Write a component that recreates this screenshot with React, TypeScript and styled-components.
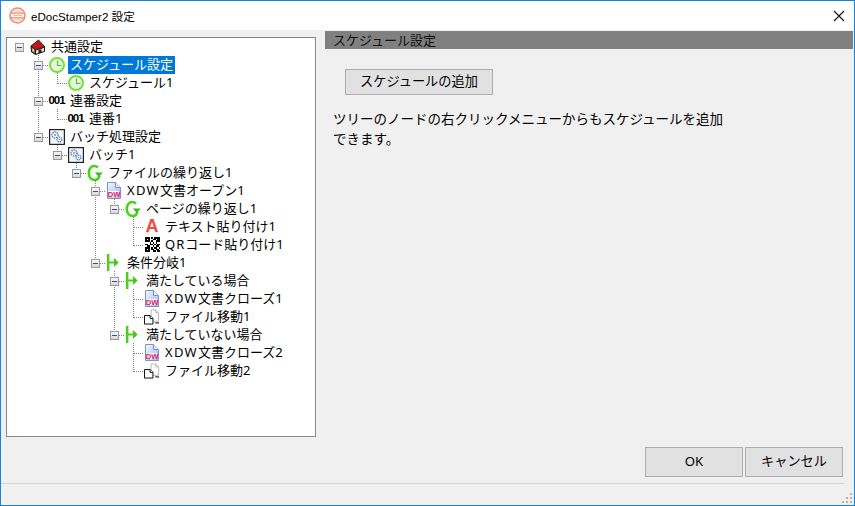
import React from "react";
import styled, { createGlobalStyle } from "styled-components";

const GlobalStyle = createGlobalStyle`
  html, body {
    margin: 0;
    padding: 0;
    background: #f0f0f0;
  }
  * {
    box-sizing: border-box;
  }
`;

const Win = styled.div`
  position: relative;
  width: 855px;
  height: 506px;
  display: flex;
  flex-direction: column;
  border: 1px solid #1883d7;
  background: #f0f0f0;
  color: #000;
  font-family: "Noto Sans", "Noto Sans CJK JP", sans-serif;
  font-size: 13px;
  overflow: hidden;
`;

const TitleBar = styled.div`
  height: 29px;
  flex: none;
  display: flex;
  align-items: center;
  padding: 0 9px 0 8px;
  background: #fff;
  font-family: "Liberation Sans", "Noto Sans CJK JP", sans-serif;
  font-size: 11.6px;
`;

const TitleText = styled.span`
  margin-left: 5px;
  flex: 1;
`;

const Body = styled.div`
  flex: 1;
  display: flex;
  min-height: 0;
`;

const TreeBox = styled.div`
  width: 310px;
  height: 400px;
  margin: 7px 0 0 5px;
  padding: 0 0 0 3px;
  flex: none;
  background: #fff;
  border: 1px solid #828790;
`;

const Row = styled.div`
  height: 18px;
  display: flex;
  align-items: stretch;
`;

// ツリーの点線1マス分
const Guide = styled.div<{ $kind?: "pipe" | "tee" | "elbow" }>`
  position: relative;
  width: 19px;
  flex: none;
  display: flex;
  align-items: center;
  justify-content: center;

  &::before {
    content: "";
    display: ${(p) => (p.$kind ? "block" : "none")};
    position: absolute;
    left: 9px;
    top: -1px;
    height: ${(p) => (p.$kind === "elbow" ? "11px" : "19px")};
    border-left: 1px dotted #808080;
  }

  &::after {
    content: "";
    display: ${(p) => (p.$kind === "tee" || p.$kind === "elbow" ? "block" : "none")};
    position: absolute;
    left: 10px;
    top: 9px;
    width: 9px;
    border-top: 1px dotted #808080;
  }
`;

const Expander = styled.div`
  position: relative;
  z-index: 1;
  width: 9px;
  height: 9px;
  margin-top: 1px;
  border: 1px solid #999;
  background: linear-gradient(#f8f8f8, #d8d8d8);
  display: flex;
  align-items: center;
  justify-content: center;

  &::before {
    content: "";
    width: 5px;
    height: 1px;
    background: #33508f;
  }
`;

const IconSlot = styled.div`
  width: 16px;
  height: 17px;
  margin-left: 1px;
  flex: none;
  display: flex;
  align-items: center;
  justify-content: center;
`;

const Label = styled.span<{ $selected?: boolean }>`
  height: 18px;
  line-height: 16px;
  margin-left: 3px;
  padding: 0 2px;
  white-space: nowrap;
  color: ${(p) => (p.$selected ? "#fff" : "#000")};
  background: ${(p) => (p.$selected ? "#0078d7" : "transparent")};
`;

// XDW / QR は参照画像だと少し幅広
const Latin = styled.span<{ $spacing: number }>`
  letter-spacing: ${(p) => p.$spacing}px;
`;

const NumberIcon = styled.span`
  font-family: "Liberation Sans", sans-serif;
  font-size: 11.5px;
  font-weight: 700;
  letter-spacing: -1.1px;
  line-height: 17px;
  margin-right: 1px;
`;

const LetterIcon = styled.span`
  font-family: "Liberation Sans", sans-serif;
  font-size: 18px;
  font-weight: 700;
  color: #e8503c;
  line-height: 17px;
`;

const Pane = styled.div`
  flex: 1;
  margin: 1px 1px 0 9px;
  display: flex;
  flex-direction: column;
  align-items: flex-start;
`;

const PaneHeader = styled.div`
  align-self: stretch;
  height: 18px;
  line-height: 18px;
  padding-left: 8px;
  background: #808080;
  color: #111;
`;

const PaneBody = styled.div`
  padding: 20px 0 0 20px;
`;

const Button = styled.button<{ $width: number; $height: number }>`
  width: ${(p) => p.$width}px;
  height: ${(p) => p.$height}px;
  padding: 0 0 3px;
  border: 1px solid #adadad;
  background: #e1e1e1;
  color: #000;
  font: inherit;
  font-size: 13.2px;
`;

const Note = styled.p`
  width: 410px;
  margin: 14px 0 0 -12px;
  font-size: 13.5px;
  line-height: 20px;
`;

const ButtonBar = styled.div`
  flex: none;
  height: 46px;
  display: flex;
  align-items: flex-end;
  justify-content: flex-end;
  gap: 2px;
  padding: 0 11px 6px 0;
`;

const StatusBar = styled.div`
  flex: none;
  height: 22px;
  margin-right: 10px;
  border-top: 1px solid #d7d7d7;
`;

const Corner = styled.div`
  position: absolute;
  right: 1px;
  bottom: 1px;
`;

const Grip = () => (
  <Corner>
    <svg width="12" height="12" viewBox="0 0 12 12" style={{ display: "block" }}>
      {[[9, 1], [5, 5], [9, 5], [1, 9], [5, 9], [9, 9]].map(([x, y]) => (
        <rect key={`${x}-${y}`} x={x} y={y} width="2" height="2" fill="#b5b5b5" />
      ))}
    </svg>
  </Corner>
);

const StampLogo = () => (
  <svg width="17" height="17" viewBox="0 0 17 17">
    <circle cx="8.5" cy="8.5" r="7.5" fill="#fff5f1" stroke="#f08a70" strokeWidth="1.5" />
    <path d="M2 6.2h13M2 10.8h13" stroke="#f08a70" strokeWidth="1.2" />
    <path d="M4.5 4h8M4 8.5h9M4.5 13h8" stroke="#f8b8a6" />
  </svg>
);

const HouseIcon = () => (
  <svg width="16" height="16" viewBox="0 0 16 16">
    <path d="M1 7 5.5 11v4.5L1.5 13z" fill="#7a6a4a" stroke="#111" />
    <rect x="2.5" y="9.5" width="1.5" height="3" fill="#f4e8c8" />
    <path d="M5.5 11l9-3v4.5l-9 3z" fill="#f0e2c0" stroke="#111" />
    <path d="M1 7 8.5 1 15 8 5.5 11z" fill="#c01818" stroke="#222" strokeLinejoin="round" />
    <rect x="8.5" y="10.5" width="3" height="3.5" fill="#222" />
  </svg>
);

const ClockIcon = () => (
  <svg width="16" height="16" viewBox="0 0 16 16">
    <circle cx="8" cy="8" r="7" fill="#e6f8d8" stroke="#74e040" strokeWidth="2" />
    <path d="M8.5 3.5V8.5H12.5" fill="none" stroke="#56bc34" strokeWidth="1.2" />
  </svg>
);

const GearIcon = () => (
  <svg width="16" height="16" viewBox="0 0 16 16">
    <rect x="0.6" y="0.6" width="14.8" height="14.8" fill="#f6f6f6" stroke="#222" strokeWidth="1.2" />
    <circle cx="6" cy="6" r="3" fill="#fff" stroke="#4f86c6" strokeWidth="1.4" strokeDasharray="1.5 .7" />
    <circle cx="6" cy="6" r="1" fill="#8a8a8a" />
    <circle cx="10.5" cy="10.5" r="2.4" fill="#fff" stroke="#4f86c6" strokeWidth="1.3" strokeDasharray="1.3 .6" />
    <circle cx="10.5" cy="10.5" r=".8" fill="#8a8a8a" />
  </svg>
);

const LoopIcon = () => (
  <svg width="16" height="18" viewBox="0 0 16 18">
    <path d="M11 3.4C9.8 2.4 8.8 2 7.5 2 4 2 1.8 4.9 1.8 9s2.2 7 5.8 7c2.5 0 4.2-1.4 4.8-4" fill="none" stroke="#44d414" strokeWidth="2.6" />
    <path d="M7.8 8.6h8l-4 4.4z" fill="#3fb626" />
  </svg>
);

const DocIcon = () => (
  <svg width="14" height="17" viewBox="0 0 14 17">
    <defs>
      <linearGradient id="docFill" x1="0" y1="0" x2="1" y2="1">
        <stop offset="0" stopColor="#f4f7ff" />
        <stop offset="1" stopColor="#9db8ee" />
      </linearGradient>
    </defs>
    <path d="M.5.5h8l5 5v11H.5z" fill="url(#docFill)" stroke="#7d92c0" />
    <path d="M8.5.5v5h5" fill="#e6ecf8" stroke="#7d92c0" />
    <rect x="1" y="9" width="10.5" height="6" fill="#fff" />
    <text x="0.8" y="14.8" fontSize="7.6" fontWeight="700" fill="#e0105c" fontFamily="Liberation Sans, sans-serif">DW</text>
  </svg>
);

const QR_CELLS = [
  "1110101111",
  "1010011011",
  "1110100111",
  "0001010100",
  "1101101011",
  "0110010110",
  "1110101101",
  "1010110110",
  "1110011011",
];

const QrIcon = () => (
  <svg width="15" height="15" viewBox="0 0 10 9" preserveAspectRatio="none" shapeRendering="crispEdges">
    {QR_CELLS.map((line, y) =>
      line.split("").map((c, x) =>
        c === "1" ? <rect key={`${x}-${y}`} x={x} y={y} width="1" height="1" fill="#000" /> : null
      )
    )}
  </svg>
);

const BranchIcon = () => (
  <svg width="16" height="17" viewBox="0 0 16 17">
    <rect x="1" y="0" width="2.4" height="17" fill="#44d414" />
    <rect x="3" y="7.5" width="6" height="2" fill="#44d414" />
    <path d="M8 4 12.6 8.5 8 13z" fill="#44c41c" />
  </svg>
);

const MoveIcon = () => (
  <svg width="17" height="16" viewBox="0 0 17 16">
    <path d="M7.5.5h5l3 3v9h-8z" fill="#fff" stroke="#b4b4b4" />
    <path d="M12.5.5v3h3" fill="#eee" stroke="#b4b4b4" />
    <rect x="12" y="13.5" width="4" height="1.5" fill="#444" />
    <path d="M.5 6.5h6l3 3v6h-9z" fill="#fff" stroke="#000" />
    <path d="M6.5 6.5v3h3" fill="#fff" stroke="#000" />
  </svg>
);

const ICONS = {
  house: <HouseIcon />,
  clock: <ClockIcon />,
  number: <NumberIcon>001</NumberIcon>,
  gear: <GearIcon />,
  loop: <LoopIcon />,
  doc: <DocIcon />,
  letter: <LetterIcon>A</LetterIcon>,
  qr: <QrIcon />,
  branch: <BranchIcon />,
  move: <MoveIcon />,
};

type GuideKind = "" | "pipe" | "tee" | "elbow";

type TreeNode = {
  guides: GuideKind[];
  open?: boolean;
  icon: keyof typeof ICONS;
  latin?: string;
  latinSpacing?: number;
  label: string;
  selected?: boolean;
};

const NODES: TreeNode[] = [
  { guides: [""], open: true, icon: "house", label: "共通設定" },
  { guides: ["", "tee"], open: true, icon: "clock", label: "スケジュール設定", selected: true },
  { guides: ["", "pipe", "elbow"], icon: "clock", label: "スケジュール1" },
  { guides: ["", "tee"], open: true, icon: "number", label: "連番設定" },
  { guides: ["", "pipe", "elbow"], icon: "number", label: "連番1" },
  { guides: ["", "elbow"], open: true, icon: "gear", label: "バッチ処理設定" },
  { guides: ["", "", "elbow"], open: true, icon: "gear", label: "バッチ1" },
  { guides: ["", "", "", "elbow"], open: true, icon: "loop", label: "ファイルの繰り返し1" },
  { guides: ["", "", "", "", "tee"], open: true, icon: "doc", latin: "XDW", latinSpacing: 1.3, label: "文書オープン1" },
  { guides: ["", "", "", "", "pipe", "elbow"], open: true, icon: "loop", label: "ページの繰り返し1" },
  { guides: ["", "", "", "", "pipe", "", "tee"], icon: "letter", label: "テキスト貼り付け1" },
  { guides: ["", "", "", "", "pipe", "", "elbow"], icon: "qr", latin: "QR", latinSpacing: 1, label: "コード貼り付け1" },
  { guides: ["", "", "", "", "elbow"], open: true, icon: "branch", label: "条件分岐1" },
  { guides: ["", "", "", "", "", "tee"], open: true, icon: "branch", label: "満たしている場合" },
  { guides: ["", "", "", "", "", "pipe", "tee"], icon: "doc", latin: "XDW", latinSpacing: 1.3, label: "文書クローズ1" },
  { guides: ["", "", "", "", "", "pipe", "elbow"], icon: "move", label: "ファイル移動1" },
  { guides: ["", "", "", "", "", "elbow"], open: true, icon: "branch", label: "満たしていない場合" },
  { guides: ["", "", "", "", "", "", "tee"], icon: "doc", latin: "XDW", latinSpacing: 1.3, label: "文書クローズ2" },
  { guides: ["", "", "", "", "", "", "elbow"], icon: "move", label: "ファイル移動2" },
];

const App: React.FC = () => {
  return (
    <Win>
      <GlobalStyle />
      <TitleBar>
        <StampLogo />
        <TitleText>eDocStamper2 設定</TitleText>
        <svg width="12" height="12" viewBox="0 0 12 12">
          <path d="M1 1l10 10M11 1 1 11" stroke="#111" strokeWidth="1.1" />
        </svg>
      </TitleBar>
      <Body>
        <TreeBox>
          {NODES.map((node) => (
            <Row key={node.label}>
              {node.guides.map((kind, i) => (
                <Guide key={i} $kind={kind || undefined}>
                  {node.open && i === node.guides.length - 1 && <Expander />}
                </Guide>
              ))}
              <IconSlot>{ICONS[node.icon]}</IconSlot>
              <Label $selected={node.selected}>
                {node.latin && <Latin $spacing={node.latinSpacing ?? 0}>{node.latin}</Latin>}
                {node.label}
              </Label>
            </Row>
          ))}
        </TreeBox>
        <Pane>
          <PaneHeader>スケジュール設定</PaneHeader>
          <PaneBody>
            <Button $width={148} $height={26}>スケジュールの追加</Button>
            <Note>
              ツリーのノードの右クリックメニューからもスケジュールを追加
              <br />
              できます。
            </Note>
          </PaneBody>
        </Pane>
      </Body>
      <ButtonBar>
        <Button $width={98} $height={30}>OK</Button>
        <Button $width={98} $height={30}>キャンセル</Button>
      </ButtonBar>
      <StatusBar />
      <Grip />
    </Win>
  );
};

export default App;
